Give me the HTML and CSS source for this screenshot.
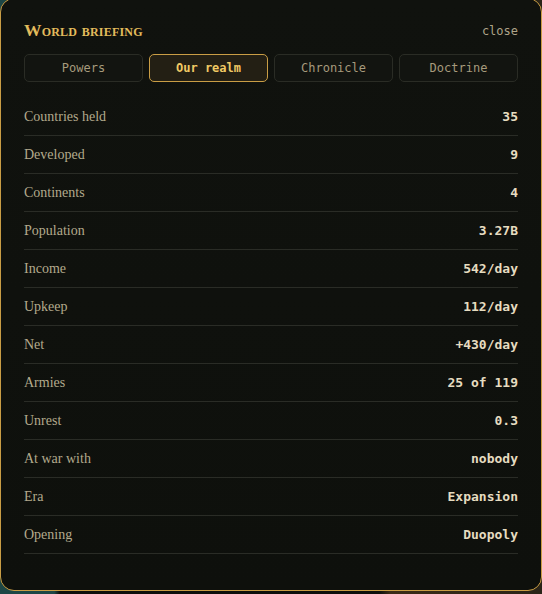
FILE: index.html
```html
<!DOCTYPE html>
<html>
<head>
<meta charset="utf-8">
<link rel="stylesheet" href="styles.css">
</head>
<body>
<div class="panel">
  <div class="head">
    <h1 class="title">World briefing</h1>
    <span class="close">close</span>
  </div>
  <div class="tabs">
    <div class="tab">Powers</div>
    <div class="tab active">Our realm</div>
    <div class="tab">Chronicle</div>
    <div class="tab">Doctrine</div>
  </div>
  <div class="rows">
    <div class="row"><span class="label">Countries held</span><span class="value">35</span></div>
    <div class="row"><span class="label">Developed</span><span class="value">9</span></div>
    <div class="row"><span class="label">Continents</span><span class="value">4</span></div>
    <div class="row"><span class="label">Population</span><span class="value">3.27B</span></div>
    <div class="row"><span class="label">Income</span><span class="value">542/day</span></div>
    <div class="row"><span class="label">Upkeep</span><span class="value">112/day</span></div>
    <div class="row"><span class="label">Net</span><span class="value">+430/day</span></div>
    <div class="row"><span class="label">Armies</span><span class="value">25 of 119</span></div>
    <div class="row"><span class="label">Unrest</span><span class="value">0.3</span></div>
    <div class="row"><span class="label">At war with</span><span class="value">nobody</span></div>
    <div class="row"><span class="label">Era</span><span class="value">Expansion</span></div>
    <div class="row"><span class="label">Opening</span><span class="value">Duopoly</span></div>
  </div>
</div>
</body>
</html>
```

FILE: styles.css
```css
html, body {
  margin: 0;
  padding: 0;
}
body {
  width: 542px;
  height: 594px;
  overflow: hidden;
  background: linear-gradient(90deg, #1d4645 0%, #1d4645 10%, #0d0f0b 11%, #0d0f0b 70%, #3a2a16 72%, #2a2418 100%);
}
.panel {
  box-sizing: border-box;
  width: 542px;
  height: 593px;
  margin-top: -2px;
  border: 1.5px solid #c99d45;
  border-radius: 14px;
  background: linear-gradient(180deg, #10120e 0%, #0e100c 100%);
  padding: 0 23px 0 23px;
}
.head {
  display: flex;
  justify-content: space-between;
  align-items: center;
  height: 55px;
  padding-top: 8px;
  box-sizing: border-box;
}
.title {
  margin: 0;
  font-family: "Liberation Serif", serif;
  font-variant: small-caps;
  font-weight: bold;
  font-size: 17.5px;
  letter-spacing: 0.2px;
  color: #e2bb5c;
}
.close {
  font-family: "DejaVu Sans Mono", monospace;
  font-size: 12px;
  color: #aea489;
  padding-top: 1px;
}
.tabs {
  display: grid;
  grid-template-columns: repeat(4, 1fr);
  gap: 6px;
}
.tab {
  height: 28px;
  box-sizing: border-box;
  border: 1px solid #2a2c25;
  border-radius: 5px;
  background: #121410;
  display: flex;
  align-items: center;
  justify-content: center;
  font-family: "DejaVu Sans Mono", monospace;
  font-size: 12px;
  color: #a69a7c;
}
.tab.active {
  border-color: #c99d45;
  background: #231f14;
  color: #f0c964;
  font-weight: bold;
}
.rows {
  margin-top: 16px;
}
.row {
  display: flex;
  justify-content: space-between;
  align-items: center;
  height: 38px;
  box-sizing: border-box;
  border-bottom: 1px solid #2a2c26;
  padding-bottom: 1px;
}
.label {
  font-family: "Liberation Serif", serif;
  font-size: 14px;
  color: #b3aa8c;
  padding-top: 1px;
}
.value {
  font-family: "DejaVu Sans Mono", monospace;
  font-weight: bold;
  font-size: 13px;
  color: #e6dcc0;
}
```
